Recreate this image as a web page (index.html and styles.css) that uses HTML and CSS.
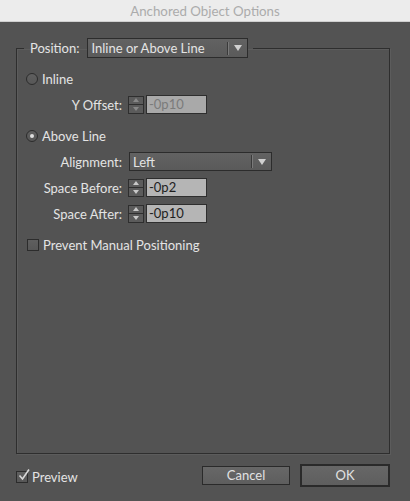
FILE: index.html
```html
<!DOCTYPE html>
<html>
<head>
<meta charset="utf-8">
<link rel="stylesheet" href="styles.css">
</head>
<body>
<div class="window">
  <div class="titlebar">Anchored Object Options</div>
  <div class="content">
    <fieldset class="group">
      <legend class="legend">
        <span class="label">Position:</span>
        <span class="dropdown dropdown-position">
          <span class="dropdown-text">Inline or Above Line</span>
          <span class="dropdown-divider"></span>
          <span class="dropdown-arrow"></span>
        </span>
      </legend>

      <div class="radio-row first">
        <span class="radio"></span>
        <span class="label">Inline</span>
      </div>
      <div class="field-row">
        <span class="field-label">Y Offset:</span>
        <span class="spinner disabled"><span class="spin up"></span><span class="spin down"></span></span>
        <span class="input disabled">-0p10</span>
      </div>

      <div class="radio-row section">
        <span class="radio checked"></span>
        <span class="label">Above Line</span>
      </div>
      <div class="field-row">
        <span class="field-label">Alignment:</span>
        <span class="dropdown dropdown-align">
          <span class="dropdown-text">Left</span>
          <span class="dropdown-divider"></span>
          <span class="dropdown-arrow"></span>
        </span>
      </div>
      <div class="field-row">
        <span class="field-label">Space Before:</span>
        <span class="spinner"><span class="spin up"></span><span class="spin down"></span></span>
        <span class="input">-0p2</span>
      </div>
      <div class="field-row">
        <span class="field-label">Space After:</span>
        <span class="spinner"><span class="spin up"></span><span class="spin down"></span></span>
        <span class="input">-0p10</span>
      </div>

      <div class="radio-row section">
        <span class="checkbox"></span>
        <span class="label">Prevent Manual Positioning</span>
      </div>
    </fieldset>

    <div class="footer">
      <div class="preview">
        <span class="checkbox checked">
          <svg class="check" width="14" height="14" viewBox="0 0 14 14"><path d="M2.5 7.5 L5.5 11 L12 1.5" fill="none" stroke="#d8d8d8" stroke-width="1.6"/></svg>
        </span>
        <span class="label">Preview</span>
      </div>
      <div class="buttons">
        <span class="button">Cancel</span>
        <span class="button default">OK</span>
      </div>
    </div>
  </div>
</div>
</body>
</html>
```

FILE: styles.css
```css
html, body {
  margin: 0;
  padding: 0;
  background: #535353;
}

.window {
  width: 410px;
  height: 501px;
  display: flex;
  flex-direction: column;
  font-family: "Lato", "Liberation Sans", sans-serif;
  font-size: 13px;
  color: #e4e4e4;
  background: #535353;
}

.titlebar {
  height: 22px;
  line-height: 22px;
  flex: none;
  background: #ececec;
  color: #ababab;
  text-align: center;
  font-size: 13.3px;
  border-bottom: 1px solid #cfcfcf;
  box-sizing: border-box;
}

.content {
  flex: 1;
  display: flex;
  flex-direction: column;
  padding: 16px 20px 14px 16px;
  min-height: 0;
}

.group {
  flex: 1;
  margin: 0;
  min-width: 0;
  padding: 12px 10px 0 9px;
  border: 1px solid #2e2e2e;
  box-shadow: inset 1px 1px 0 #5c5c5c, 1px 1px 0 #5c5c5c;
}

.legend {
  display: flex;
  align-items: center;
  gap: 8px;
  margin-left: -2px;
  padding: 0 5px 0 6px;
  height: 20px;
}

.label {
  white-space: nowrap;
}

.dropdown {
  display: flex;
  align-items: center;
  box-sizing: border-box;
  height: 20px;
  border: 1px solid #2c2c2c;
  background: linear-gradient(#626262, #5a5a5a);
  position: relative;
}

.dropdown-position {
  width: 161px;
}

.dropdown-align {
  width: 143px;
  height: 19px;
  margin-left: 1px;
}

.dropdown-text {
  flex: 1;
  padding-left: 3px;
  white-space: nowrap;
}

.dropdown-divider {
  width: 1px;
  height: 13px;
  background: #3a3a3a;
  box-shadow: 1px 0 0 #7a7a7a;
  margin-right: 6px;
}

.dropdown-arrow {
  width: 0;
  height: 0;
  border-left: 4px solid transparent;
  border-right: 4px solid transparent;
  border-top: 6px solid #d0d0d0;
  margin-right: 5px;
}

.radio-row {
  display: flex;
  align-items: center;
  gap: 4px;
  height: 18px;
}

.radio-row.section {
  margin-top: 13px;
}

.radio {
  width: 12px;
  height: 12px;
  box-sizing: border-box;
  border-radius: 50%;
  border: 1px solid #2c2c2c;
  background: linear-gradient(#5f5f5f, #575757);
  position: relative;
}

.radio.checked::after {
  content: "";
  position: absolute;
  left: 3px;
  top: 3px;
  width: 4px;
  height: 4px;
  border-radius: 50%;
  background: #dedede;
}

.checkbox {
  width: 12px;
  height: 12px;
  box-sizing: border-box;
  border: 1px solid #2c2c2c;
  background: linear-gradient(#5f5f5f, #575757);
  margin-left: 1px;
  position: relative;
}

.field-row {
  display: grid;
  grid-template-columns: 96px auto auto;
  justify-content: start;
  column-gap: 6px;
  align-items: center;
  height: 19px;
  margin-top: 7px;
}

.field-row .field-label {
  text-align: right;
  white-space: nowrap;
}

.spinner {
  display: flex;
  flex-direction: column;
  width: 16px;
  height: 18px;
  box-sizing: border-box;
  border: 1px solid #2e2e2e;
  background: #5b5b5b;
  margin-right: -4px;
}

.spin {
  flex: 1;
  display: flex;
  align-items: center;
  justify-content: center;
}

.spin.up {
  border-bottom: 1px solid #2e2e2e;
}

.spin.up::after {
  content: "";
  border-left: 3px solid transparent;
  border-right: 3px solid transparent;
  border-bottom: 4px solid #c8c8c8;
}

.spin.down::after {
  content: "";
  border-left: 3px solid transparent;
  border-right: 3px solid transparent;
  border-top: 4px solid #c8c8c8;
}

.spinner.disabled .spin.up::after {
  border-bottom-color: #888;
}

.spinner.disabled .spin.down::after {
  border-top-color: #888;
}

.input {
  width: 61px;
  height: 19px;
  box-sizing: border-box;
  border: 1px solid #2e2e2e;
  background: #b5b5b5;
  color: #1e1e1e;
  padding-left: 2px;
  line-height: 17px;
}

.input.disabled {
  background: #a9a9a9;
  color: #7b7b7b;
}

.footer {
  flex: none;
  display: flex;
  align-items: center;
  justify-content: space-between;
  margin-top: 10px;
  height: 23px;
}

.preview {
  display: flex;
  align-items: center;
  gap: 4px;
  margin-top: 2px;
}

.preview .checkbox {
  margin-left: 0;
}

.check {
  position: absolute;
  left: 0;
  top: -4px;
}

.buttons {
  display: flex;
  align-items: center;
  gap: 10px;
}

.button {
  width: 88px;
  height: 19px;
  box-sizing: border-box;
  border: 1px solid #2a2a2a;
  background: linear-gradient(#676767, #5e5e5e);
  text-align: center;
  line-height: 17px;
  color: #e2e2e2;
}

.button.default {
  width: 90px;
  height: 23px;
  border: 2px solid #2a2a2a;
  line-height: 19px;
}
```
